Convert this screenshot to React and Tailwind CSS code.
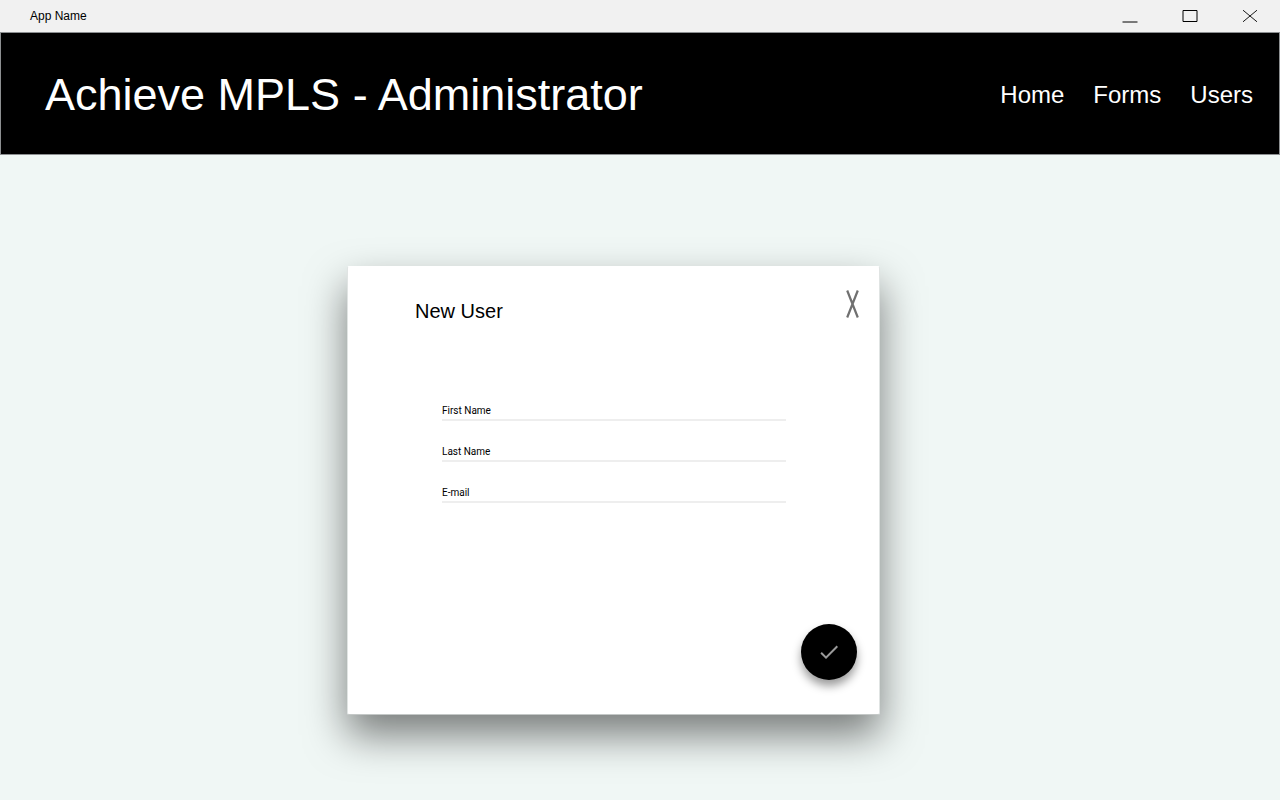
const navItems = ['Home', 'Forms', 'Users'];

const fields = [
  { id: 'first-name', label: 'First Name', type: 'text' },
  { id: 'last-name', label: 'Last Name', type: 'text' },
  { id: 'email', label: 'E-mail', type: 'email' },
];

function TitleBar() {
  return (
    <div className="flex h-8 items-center justify-between bg-[#f1f1f1] pl-[30px]">
      <span className="text-xs text-black">App Name</span>
      <div className="flex">
        <button type="button" aria-label="Minimize" className="flex h-8 w-[60px] items-center justify-center">
          <svg width="16" height="16" viewBox="0 0 16 16" fill="none">
            <path d="M0.5 14H15.5" stroke="#000" />
          </svg>
        </button>
        <button type="button" aria-label="Maximize" className="flex h-8 w-[60px] items-center justify-center">
          <svg width="16" height="16" viewBox="0 0 16 16" fill="none">
            <path d="M1 2.5H15V13.5H1Z" stroke="#000" />
          </svg>
        </button>
        <button type="button" aria-label="Close window" className="flex h-8 w-[60px] items-center justify-center">
          <svg width="16" height="16" viewBox="0 0 16 16" fill="none">
            <path d="M1 2.2L15 13.8M15 2.2L1 13.8" stroke="#000" strokeWidth="0.9" />
          </svg>
        </button>
      </div>
    </div>
  );
}

function Header() {
  return (
    <header className="flex items-center justify-between border border-[#8c8f91] bg-black pt-[35px] pr-[26px] pb-[33px] pl-11 text-white">
      <h1 className="text-[45px] leading-[53px]">Achieve MPLS - Administrator</h1>
      <nav className="flex gap-[29px] text-2xl">
        {navItems.map((item) => (
          <a key={item} href={`#${item.toLowerCase()}`}>
            {item}
          </a>
        ))}
      </nav>
    </header>
  );
}

function NewUserDialog() {
  return (
    <form
      role="dialog"
      aria-labelledby="dialog-title"
      onSubmit={(event) => event.preventDefault()}
      className="flex min-h-[449px] w-full max-w-[533px] flex-col rounded-xs border border-x-[#e0e4e3] border-t-white border-b-[#c4c8c7] bg-white shadow-[0_20px_40px_rgba(0,0,0,0.5)]"
    >
      <div className="flex items-start justify-between pt-[23px] pr-5 pl-[67px]">
        <h2 id="dialog-title" className="pt-[7px] text-xl leading-7 text-black">
          New User
        </h2>
        <button type="button" aria-label="Close dialog">
          <svg width="13" height="28" viewBox="0 0 13 28" fill="none">
            <path d="M1.2 0.5L11.8 27.5M11.8 0.5L1.2 27.5" stroke="#707070" strokeWidth="2.2" />
          </svg>
        </button>
      </div>
      <div className="flex flex-col pt-[55px] pr-[93px] pl-[94px] font-[Roboto,sans-serif] text-[10px] leading-3">
        {fields.map((field) => (
          <div key={field.id} className="flex h-[41px] items-end gap-2 border-b-2 border-[#eeeeee] pb-[2px]">
            <label htmlFor={field.id} className="text-black">
              {field.label}
            </label>
            <input id={field.id} type={field.type} className="min-w-0 flex-1 bg-transparent outline-none" />
          </div>
        ))}
      </div>
      <div className="mt-auto flex justify-end pr-[22px] pb-[34px]">
        <button
          type="submit"
          aria-label="Save user"
          className="flex size-14 items-center justify-center rounded-full bg-black shadow-[0_6px_10px_rgba(0,0,0,0.4)]"
        >
          <svg width="24" height="24" viewBox="0 0 24 24" fill="#9a9a9a">
            <path d="M9 16.17L4.83 12l-1.42 1.41L9 19 21 7l-1.41-1.41z" />
          </svg>
        </button>
      </div>
    </form>
  );
}

export default function App() {
  return (
    <div className="flex min-h-screen flex-col bg-[#f0f7f5] font-['Liberation_Sans',Arial,sans-serif]">
      <TitleBar />
      <Header />
      <main className="flex flex-1 items-start justify-center pt-[111px] pr-[53px]">
        <NewUserDialog />
      </main>
    </div>
  );
}
